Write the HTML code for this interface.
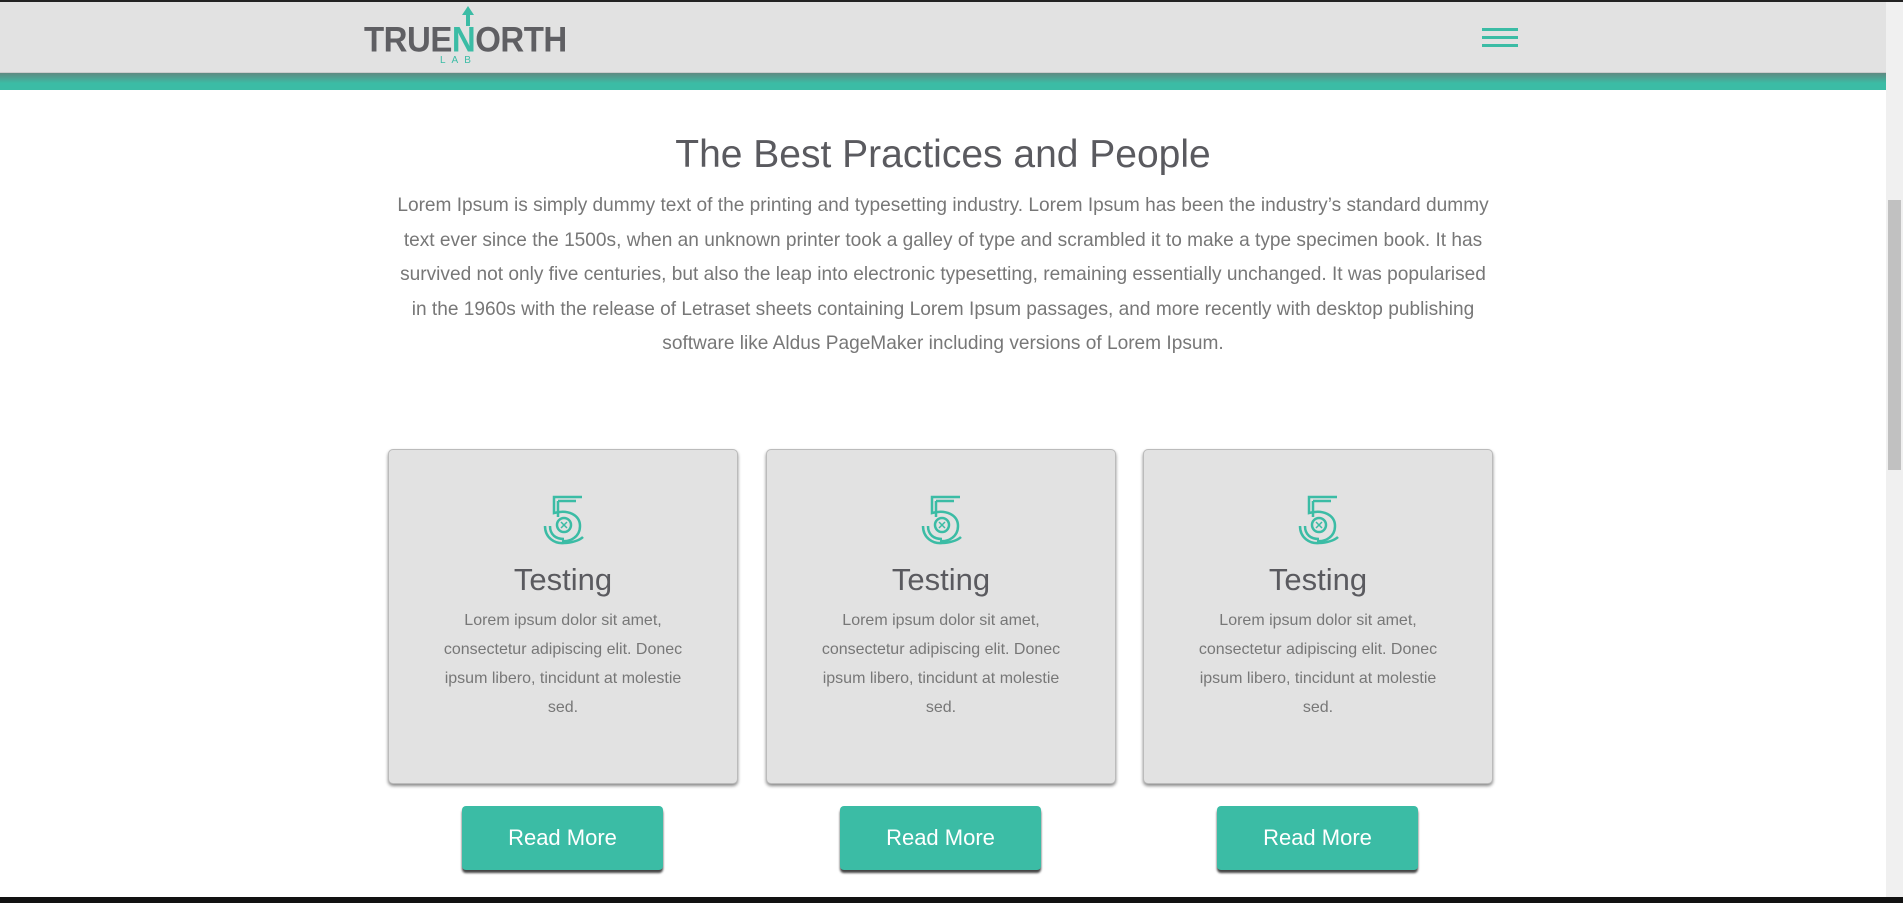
<!DOCTYPE html>
<html><head><meta charset="utf-8"><style>
*{margin:0;padding:0;box-sizing:border-box}
body{width:1903px;height:903px;overflow:hidden;background:#fff;font-family:"Liberation Sans","DejaVu Sans",sans-serif;color:#666;position:relative}
.topline{position:absolute;left:0;top:0;width:1903px;height:2px;background:#222}
.header{position:absolute;left:0;top:2px;width:1886px;height:71px;background:#e2e2e2;border-bottom:1px solid #ccc}
.bar{position:absolute;left:0;top:73px;width:1886px;height:17px;background:linear-gradient(#5f8a82,#3bbca5 60%,#3bbca5);}
.scroll{position:absolute;right:0;top:2px;width:17px;height:896px;background:#f0f0f0}
.thumb{position:absolute;right:2px;top:198px;width:13px;height:270px;background:#c1c1c1}
.bottom{position:absolute;left:0;top:897px;width:1903px;height:6px;background:#111}
.logo{position:absolute;left:364px;top:19px;font-weight:bold;font-size:33px;letter-spacing:-0.5px;color:#5f5f63;transform:scaleY(1.08);transform-origin:0 0}
.logo .n{color:#3bbca5}
.lab{position:absolute;left:440px;top:55px;font-size:10px;letter-spacing:6px;color:#3bbca5}
.ham{position:absolute;left:1482px;top:28px;width:36px}
.ham div{height:3px;background:#3bbca5;margin-bottom:5px}
h1{position:absolute;top:133px;left:0;width:1886px;text-align:center;font-weight:normal;font-size:39px;color:#5a5a5f}
p.intro{position:absolute;top:189px;left:368px;width:1150px;text-align:center;font-size:19.1px;line-height:34.6px;color:#777;white-space:nowrap}
.card{position:absolute;top:449px;width:350px;height:335px;background:#e2e2e2;border:1px solid #bbb;border-radius:5px;box-shadow:0 2px 3px #888;text-align:center}
.card svg{position:absolute;left:153px;top:45px}
.card h2{position:absolute;top:112px;width:100%;font-weight:normal;font-size:31px;color:#5a5a5f}
.card p{position:absolute;top:156px;left:40px;width:268px;font-size:16px;line-height:29px;color:#777}
.btn{position:absolute;top:806px;width:201px;height:64px;background:#3bbca5;border-radius:4px;box-shadow:0 3px 2px #444;color:#fff;font-size:22px;text-align:center;line-height:64px}
</style></head><body>
<div class="topline"></div>
<div class="header"></div>
<div class="bar"></div>
<div class="logo">TRUE<span class="n">N</span>ORTH</div>
<svg style="position:absolute;left:461px;top:6px" width="14" height="20"><path d="M7 0L1 9H5V20H9V9H13Z" fill="#3bbca5"/></svg>
<div class="lab">LAB</div>
<div class="ham"><div></div><div></div><div></div></div>
<h1>The Best Practices and People</h1>
<p class="intro">Lorem Ipsum is simply dummy text of the printing and typesetting industry. Lorem Ipsum has been the industry’s standard dummy<br>text ever since the 1500s, when an unknown printer took a galley of type and scrambled it to make a type specimen book. It has<br>survived not only five centuries, but also the leap into electronic typesetting, remaining essentially unchanged. It was popularised<br>in the 1960s with the release of Letraset sheets containing Lorem Ipsum passages, and more recently with desktop publishing<br>software like Aldus PageMaker including versions of Lorem Ipsum.</p>

<div class="card" style="left:388px"><svg width="44" height="50" viewBox="0 0 44 50" fill="none" stroke="#3bbca5" stroke-width="2.5"><path d="M40 2H12V18C26 14 38 20 38 31C38 42 28 47 20 46"/><path d="M16 6H34M16 6V22"/><circle cx="22" cy="30" r="7"/><path d="M19 27l6 6M25 27l-6 6" stroke-width="1.5"/><path d="M3 31C3 43 13 49 22 48C30 48 38 45 41 42"/><path d="M8 31C8 40 14 44 22 44"/></svg><h2>Testing</h2><p>Lorem ipsum dolor sit amet, consectetur adipiscing elit. Donec ipsum libero, tincidunt at molestie sed.</p></div>
<div class="card" style="left:766px"><svg width="44" height="50" viewBox="0 0 44 50" fill="none" stroke="#3bbca5" stroke-width="2.5"><path d="M40 2H12V18C26 14 38 20 38 31C38 42 28 47 20 46"/><path d="M16 6H34M16 6V22"/><circle cx="22" cy="30" r="7"/><path d="M19 27l6 6M25 27l-6 6" stroke-width="1.5"/><path d="M3 31C3 43 13 49 22 48C30 48 38 45 41 42"/><path d="M8 31C8 40 14 44 22 44"/></svg><h2>Testing</h2><p>Lorem ipsum dolor sit amet, consectetur adipiscing elit. Donec ipsum libero, tincidunt at molestie sed.</p></div>
<div class="card" style="left:1143px"><svg width="44" height="50" viewBox="0 0 44 50" fill="none" stroke="#3bbca5" stroke-width="2.5"><path d="M40 2H12V18C26 14 38 20 38 31C38 42 28 47 20 46"/><path d="M16 6H34M16 6V22"/><circle cx="22" cy="30" r="7"/><path d="M19 27l6 6M25 27l-6 6" stroke-width="1.5"/><path d="M3 31C3 43 13 49 22 48C30 48 38 45 41 42"/><path d="M8 31C8 40 14 44 22 44"/></svg><h2>Testing</h2><p>Lorem ipsum dolor sit amet, consectetur adipiscing elit. Donec ipsum libero, tincidunt at molestie sed.</p></div>

<div class="btn" style="left:462px">Read More</div>
<div class="btn" style="left:840px">Read More</div>
<div class="btn" style="left:1217px">Read More</div>

<div class="scroll"><div class="thumb"></div></div>
<div class="bottom"></div>
</body></html>
